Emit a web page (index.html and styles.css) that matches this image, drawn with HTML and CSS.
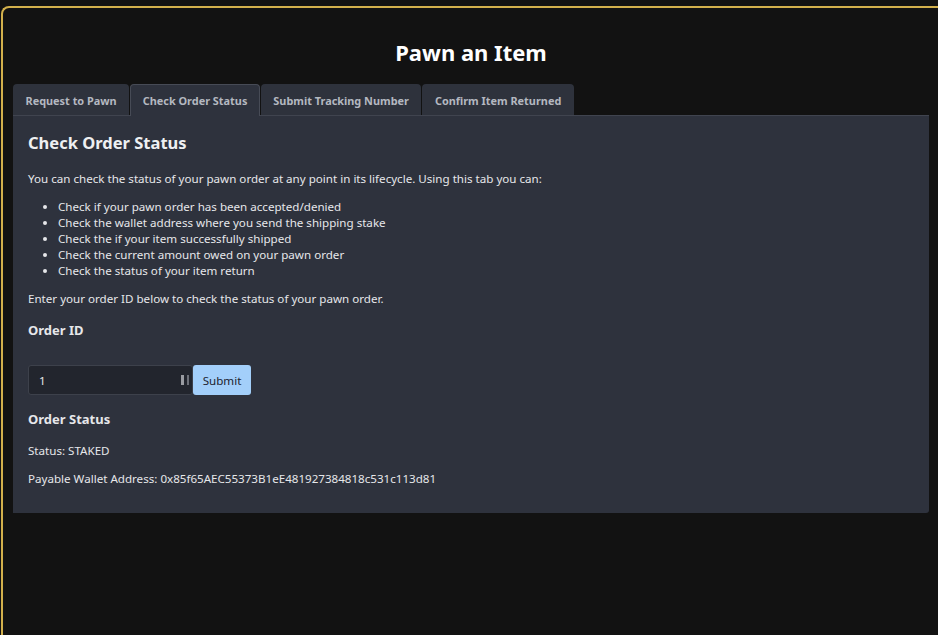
FILE: index.html
```html
<!DOCTYPE html>
<html>
<head>
<meta charset="utf-8">
<link rel="stylesheet" href="styles.css">
</head>
<body>
<div class="frame">
  <h1 class="title">Pawn an Item</h1>
  <div class="tabs">
    <div class="tab">Request to Pawn</div>
    <div class="tab active">Check Order Status</div>
    <div class="tab">Submit Tracking Number</div>
    <div class="tab">Confirm Item Returned</div>
  </div>
  <div class="panel">
    <h2 class="heading">Check Order Status</h2>
    <p class="text">You can check the status of your pawn order at any point in its lifecycle. Using this tab you can:</p>
    <ul class="list">
      <li>Check if your pawn order has been accepted/denied</li>
      <li>Check the wallet address where you send the shipping stake</li>
      <li>Check the if your item successfully shipped</li>
      <li>Check the current amount owed on your pawn order</li>
      <li>Check the status of your item return</li>
    </ul>
    <p class="text">Enter your order ID below to check the status of your pawn order.</p>
    <h3 class="label">Order ID</h3>
    <div class="form">
      <div class="input"><span>1</span><span class="spin"></span></div>
      <button class="btn">Submit</button>
    </div>
    <h3 class="label status-label">Order Status</h3>
    <p class="line">Status: STAKED</p>
    <p class="line">Payable Wallet Address: 0x85f65AEC55373B1eE481927384818c531c113d81</p>
  </div>
</div>
</body>
</html>
```
FILE: styles.css
```css
html, body {
  margin: 0;
  padding: 0;
  background: #121212;
  overflow: hidden;
  height: 100%;
}
body {
  font-family: "Noto Sans", "Open Sans", sans-serif;
  color: #e6e7ea;
  padding-top: 6px;
  box-sizing: border-box;
}
.frame {
  margin-left: 1px;
  width: calc(100% - 1px);
  height: 100%;
  border-top: 2px solid #d2b04c;
  border-left: 2px solid #d2b04c;
  border-top-left-radius: 8px;
  padding: 0 0 0 10px;
  box-sizing: border-box;
}
.title {
  margin: 0;
  width: 916px;
  text-align: center;
  font-size: 22px;
  font-weight: 700;
  color: #ffffff;
  padding-top: 30px;
  height: 76px;
  box-sizing: border-box;
  line-height: 28px;
}
.tabs {
  display: flex;
  height: 32px;
  width: 916px;
  border-bottom: 1px solid #40444f;
  box-sizing: border-box;
}
.tab {
  background: #2e323c;
  color: #b4b8c0;
  font-size: 10.9px;
  font-weight: 700;
  padding: 0 11.5px;
  line-height: 31px;
  border-top-left-radius: 4px;
  border-top-right-radius: 4px;
  border: 1px solid transparent;
  border-bottom: none;
  margin-right: 1px;
}
.tab.active {
  border-color: #474b56;
  margin-bottom: -1px;
  line-height: 32px;
  background: #2e323d;
}
.panel {
  width: 916px;
  background: #2e323d;
  padding: 14px 15px 26px 15px;
  box-sizing: border-box;
  border-bottom-right-radius: 3px;
}
.heading {
  margin: 0 0 14px 0;
  font-size: 16.5px;
  font-weight: 700;
  color: #eef0f2;
  line-height: 26px;
}
.text {
  margin: 0;
  font-size: 11.6px;
  line-height: 18px;
}
.list {
  margin: 11px 0 11px 0;
  padding-left: 30px;
  font-size: 11.6px;
  line-height: 16px;
}
.label {
  margin: 12px 0 0 0;
  font-size: 13px;
  font-weight: 700;
  line-height: 20px;
}
.form {
  display: flex;
  margin-top: 25px;
  height: 30px;
}
.input {
  width: 165px;
  box-sizing: border-box;
  background: #22252d;
  border: 1px solid #3d414b;
  border-radius: 3px;
  display: flex;
  align-items: center;
  justify-content: space-between;
  padding: 0 3px 0 10px;
  font-size: 11.6px;
}
.spin {
  width: 8px;
  height: 10px;
  border-left: 3px solid #9a9ca2;
  border-right: 2px solid #6d7078;
  box-sizing: border-box;
}
.btn {
  width: 58px;
  background: #a3cffa;
  color: #1c2330;
  border: none;
  border-radius: 3px;
  font-family: inherit;
  font-size: 11.6px;
  padding: 0;
}
.status-label {
  margin-top: 14px;
}
.line {
  margin: 13px 0 0 0;
  font-size: 11.6px;
  line-height: 17px;
}
.line + .line {
  margin-top: 11px;
}
```
